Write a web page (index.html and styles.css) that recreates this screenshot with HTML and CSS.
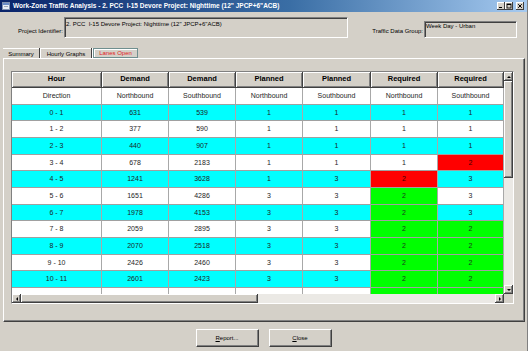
FILE: index.html
```html
<!DOCTYPE html>
<html>
<head>
<meta charset="utf-8">
<link rel="stylesheet" href="styles.css">
</head>
<body>
<div class="window">
  <div class="titlebar">
    <svg class="app-icon" width="8" height="8" viewBox="0 0 8 8">
      <rect x="0.5" y="0.5" width="7" height="7" fill="#e8eef8" stroke="#8090b0"/>
      <rect x="1" y="1" width="6" height="2" fill="#6a8cc8"/>
      <rect x="2" y="4" width="4" height="1" fill="#a0a8b8"/>
    </svg>
    <span class="title">Work-Zone Traffic Analysis - 2. PCC&nbsp; I-15 Devore Project: Nighttime (12" JPCP+6"ACB)</span>
    <div class="caption-btns">
      <div class="cbtn"><svg width="8" height="8" viewBox="0 0 8 8"><rect x="2" y="5" width="3" height="1" fill="#000"/></svg></div>
      <div class="cbtn"><svg width="8" height="8" viewBox="0 0 8 8"><rect x="2" y="2" width="4" height="4" fill="none" stroke="#000" stroke-width="0.8"/><rect x="2" y="2" width="4" height="1" fill="#000"/></svg></div>
      <div class="cbtn cbtn-close"><svg width="8" height="8" viewBox="0 0 8 8"><path d="M2.2 2.2 L5.8 5.8 M5.8 2.2 L2.2 5.8" stroke="#000" stroke-width="1"/></svg></div>
    </div>
  </div>

  <div class="fields">
    <div class="lbl lbl-project">Project Identifier:</div>
    <div class="field field-project">2. PCC&nbsp; I-15 Devore Project: Nighttime (12" JPCP+6"ACB)</div>
    <div class="lbl lbl-group">Traffic Data Group:</div>
    <div class="field field-group">Week Day - Urban</div>
  </div>

  <div class="tabs">
    <div class="tab tab-summary">Summary</div>
    <div class="tab-sep"></div>
    <div class="tab tab-hourly">Hourly Graphs</div>
    <div class="tab-sep"></div>
    <div class="tab tab-active">Lanes Open</div>
  </div>

  <div class="panel">
    <div class="grid-box">
      <div class="grid-view">
        <div class="grid">
          <div class="hc">Hour</div><div class="hc">Demand</div><div class="hc">Demand</div><div class="hc">Planned</div><div class="hc">Planned</div><div class="hc">Required</div><div class="hc">Required</div>

          <div class="c">Direction</div><div class="c">Northbound</div><div class="c">Southbound</div><div class="c">Northbound</div><div class="c">Southbound</div><div class="c">Northbound</div><div class="c">Southbound</div>

          <div class="c cy">0 - 1</div><div class="c cy">631</div><div class="c cy">539</div><div class="c cy">1</div><div class="c cy">1</div><div class="c cy">1</div><div class="c cy">1</div>
          <div class="c">1 - 2</div><div class="c">377</div><div class="c">590</div><div class="c">1</div><div class="c">1</div><div class="c">1</div><div class="c">1</div>
          <div class="c cy">2 - 3</div><div class="c cy">440</div><div class="c cy">907</div><div class="c cy">1</div><div class="c cy">1</div><div class="c cy">1</div><div class="c cy">1</div>
          <div class="c">3 - 4</div><div class="c">678</div><div class="c">2183</div><div class="c">1</div><div class="c">1</div><div class="c">1</div><div class="c rd">2</div>
          <div class="c cy">4 - 5</div><div class="c cy">1241</div><div class="c cy">3628</div><div class="c cy">1</div><div class="c cy">3</div><div class="c rd">2</div><div class="c cy">3</div>
          <div class="c">5 - 6</div><div class="c">1651</div><div class="c">4286</div><div class="c">3</div><div class="c">3</div><div class="c gr">2</div><div class="c">3</div>
          <div class="c cy">6 - 7</div><div class="c cy">1978</div><div class="c cy">4153</div><div class="c cy">3</div><div class="c cy">3</div><div class="c gr">2</div><div class="c cy">3</div>
          <div class="c">7 - 8</div><div class="c">2059</div><div class="c">2895</div><div class="c">3</div><div class="c">3</div><div class="c gr">2</div><div class="c gr">2</div>
          <div class="c cy">8 - 9</div><div class="c cy">2070</div><div class="c cy">2518</div><div class="c cy">3</div><div class="c cy">3</div><div class="c gr">2</div><div class="c gr">2</div>
          <div class="c">9 - 10</div><div class="c">2426</div><div class="c">2460</div><div class="c">3</div><div class="c">3</div><div class="c gr">2</div><div class="c gr">2</div>
          <div class="c cy">10 - 11</div><div class="c cy">2601</div><div class="c cy">2423</div><div class="c cy">3</div><div class="c cy">3</div><div class="c gr">2</div><div class="c gr">2</div>
          <div class="c"></div><div class="c"></div><div class="c"></div><div class="c"></div><div class="c"></div><div class="c gr"></div><div class="c gr"></div>
        </div>
      </div>
      <div class="vscroll">
        <div class="sbtn"><span class="tri tri-up"></span></div>
        <div class="thumb thumb-v"></div>
        <div class="track"></div>
        <div class="sbtn"><span class="tri tri-down"></span></div>
      </div>
      <div class="hscroll">
        <div class="sbtn"><span class="tri tri-left"></span></div>
        <div class="thumb thumb-h"></div>
        <div class="track"></div>
        <div class="sbtn"><span class="tri tri-right"></span></div>
      </div>
      <div class="corner"></div>
    </div>
  </div>

  <div class="buttons">
    <div class="btn"><u>R</u>eport...</div>
    <div class="btn"><u>C</u>lose</div>
  </div>
</div>
</body>
</html>
```

FILE: styles.css
```css
* { box-sizing: border-box; }
body {
  margin: 0;
  background: #d4d0c8;
  font-family: "Liberation Sans", Arial, sans-serif;
  color: #000;
}
.window {
  width: 528px;
  height: 351px;
  background: #d4d0c8;
  display: flex;
  flex-direction: column;
  overflow: hidden;
  border-right: 1px solid #808080;
}

/* title bar */
.titlebar {
  height: 12px;
  flex: none;
  display: flex;
  align-items: center;
  padding-left: 2px;
  background: linear-gradient(to right, #0a246a 0%, #3a6ea5 55%, #a6caf0 100%);
}
.app-icon { flex: none; display: block; }
.title {
  margin-left: 3px;
  color: #fff;
  font-weight: bold;
  font-size: 6.5px;
  line-height: 8px;
  white-space: nowrap;
}
.caption-btns {
  margin-left: auto;
  margin-right: 3px;
  display: flex;
}
.cbtn {
  width: 8px;
  height: 8px;
  background: #d4d0c8;
  box-shadow: inset -1px -1px #404040, inset 1px 1px #fff;
}
.cbtn svg { display: block; }
.cbtn-close { margin-left: 3px; }

/* identifier fields */
.fields {
  height: 34px;
  flex: none;
  display: flex;
  align-items: flex-start;
  padding: 5px 0 0 17px;
  font-size: 6px;
}
.lbl {
  margin-top: 10px;
  line-height: 8px;
  white-space: nowrap;
  text-align: right;
}
.lbl-project { width: 46px; }
.lbl-group { width: 52px; margin-left: 23px; }
.field {
  margin-left: 1px;
  border: 1px solid;
  border-color: #808080 #fff #fff #808080;
  box-shadow: inset 1px 1px #404040, inset -1px -1px #d4d0c8;
  line-height: 7px;
  white-space: nowrap;
  overflow: hidden;
}
.field-project {
  width: 284px;
  height: 21px;
  padding: 3px 1px 0;
}
.field-group {
  width: 93px;
  height: 17px;
  margin-top: 4px;
  padding: 1px 1px 0;
}

/* tabs */
.tabs {
  height: 12px;
  flex: none;
  display: flex;
  align-items: flex-end;
  padding-left: 3px;
  font-size: 6px;
}
.tab {
  height: 10px;
  line-height: 10px;
  text-align: center;
  white-space: nowrap;
  border-top: 1px solid #fff;
}
.tab-summary { width: 36px; }
.tab-hourly { width: 50px; }
.tab-sep {
  width: 2px;
  height: 10px;
  border-left: 1px solid #404040;
  border-right: 1px solid #fff;
}
.tab-active {
  width: 45px;
  color: #e02020;
  border: 1px solid #6f8f8f;
  box-shadow: inset 1px 1px #fff;
  line-height: 8px;
}

/* tab panel */
.panel {
  height: 264px;
  flex: none;
  margin: 0 2px 0 3px;
  border: 1px solid;
  border-color: #fff #404040 #404040 #fff;
  box-shadow: inset -1px -1px #808080;
  padding: 12px 0 0 7px;
}
.grid-box {
  width: 503px;
  height: 233px;
  border: 1px solid;
  border-color: #808080 #fff #fff #808080;
  display: grid;
  grid-template-columns: 492px 9px;
  grid-template-rows: 222px 9px;
}
.grid-view {
  overflow: hidden;
  background: #fff;
}
.grid {
  display: grid;
  grid-template-columns: 90px 67px 67px 67px 68px 67px 66px;
  grid-template-rows: 16px;
  grid-auto-rows: 16.667px;
  font-size: 7px;
  color: #1e1e1e;
}
.hc {
  background: #d4d0c8;
  font-weight: bold;
  font-size: 7.5px;
  color: #000;
  text-align: center;
  line-height: 14px;
  border-right: 1px solid #404040;
  border-bottom: 1px solid #404040;
  box-shadow: inset 1px 1px #fff, inset -1px -1px #808080;
}
.c {
  background: #fff;
  text-align: center;
  line-height: 16px;
  border-right: 1px solid #a8a8a8;
  border-bottom: 1px solid #a0a0a0;
  white-space: nowrap;
}
.cy { background: #00ffff; }
.rd { background: #ff0000; color: #3a0000; }
.gr { background: #00ff00; color: #1a3a1a; }

/* scrollbars */
.vscroll {
  display: flex;
  flex-direction: column;
}
.hscroll {
  display: flex;
}
.sbtn {
  flex: none;
  width: 9px;
  height: 9px;
  background: #d4d0c8;
  box-shadow: inset -1px -1px #404040, inset 1px 1px #fff, inset -2px -2px #808080;
  display: flex;
  align-items: center;
  justify-content: center;
}
.thumb {
  flex: none;
  background: #d4d0c8;
  box-shadow: inset -1px -1px #404040, inset 1px 1px #fff, inset -2px -2px #808080;
}
.thumb-v { height: 97px; }
.thumb-h { width: 237px; }
.track {
  flex: 1;
  background: #ebe9e5;
}
.corner { background: #d4d0c8; }
.tri { width: 0; height: 0; border: 2px solid transparent; display: block; }
.tri-up { border-bottom-color: #000; margin-top: -2px; }
.tri-down { border-top-color: #000; margin-bottom: -2px; }
.tri-left { border-right-color: #000; margin-left: -2px; }
.tri-right { border-left-color: #000; margin-right: -2px; }

/* bottom buttons */
.buttons {
  flex: 1;
  display: flex;
  justify-content: center;
  gap: 10px;
  padding-top: 7px;
  font-size: 6px;
}
.btn {
  width: 63px;
  height: 18px;
  background: #d4d0c8;
  border: 1px solid;
  border-color: #fff #404040 #404040 #fff;
  box-shadow: inset -1px -1px #808080;
  text-align: center;
  line-height: 16px;
}
```
